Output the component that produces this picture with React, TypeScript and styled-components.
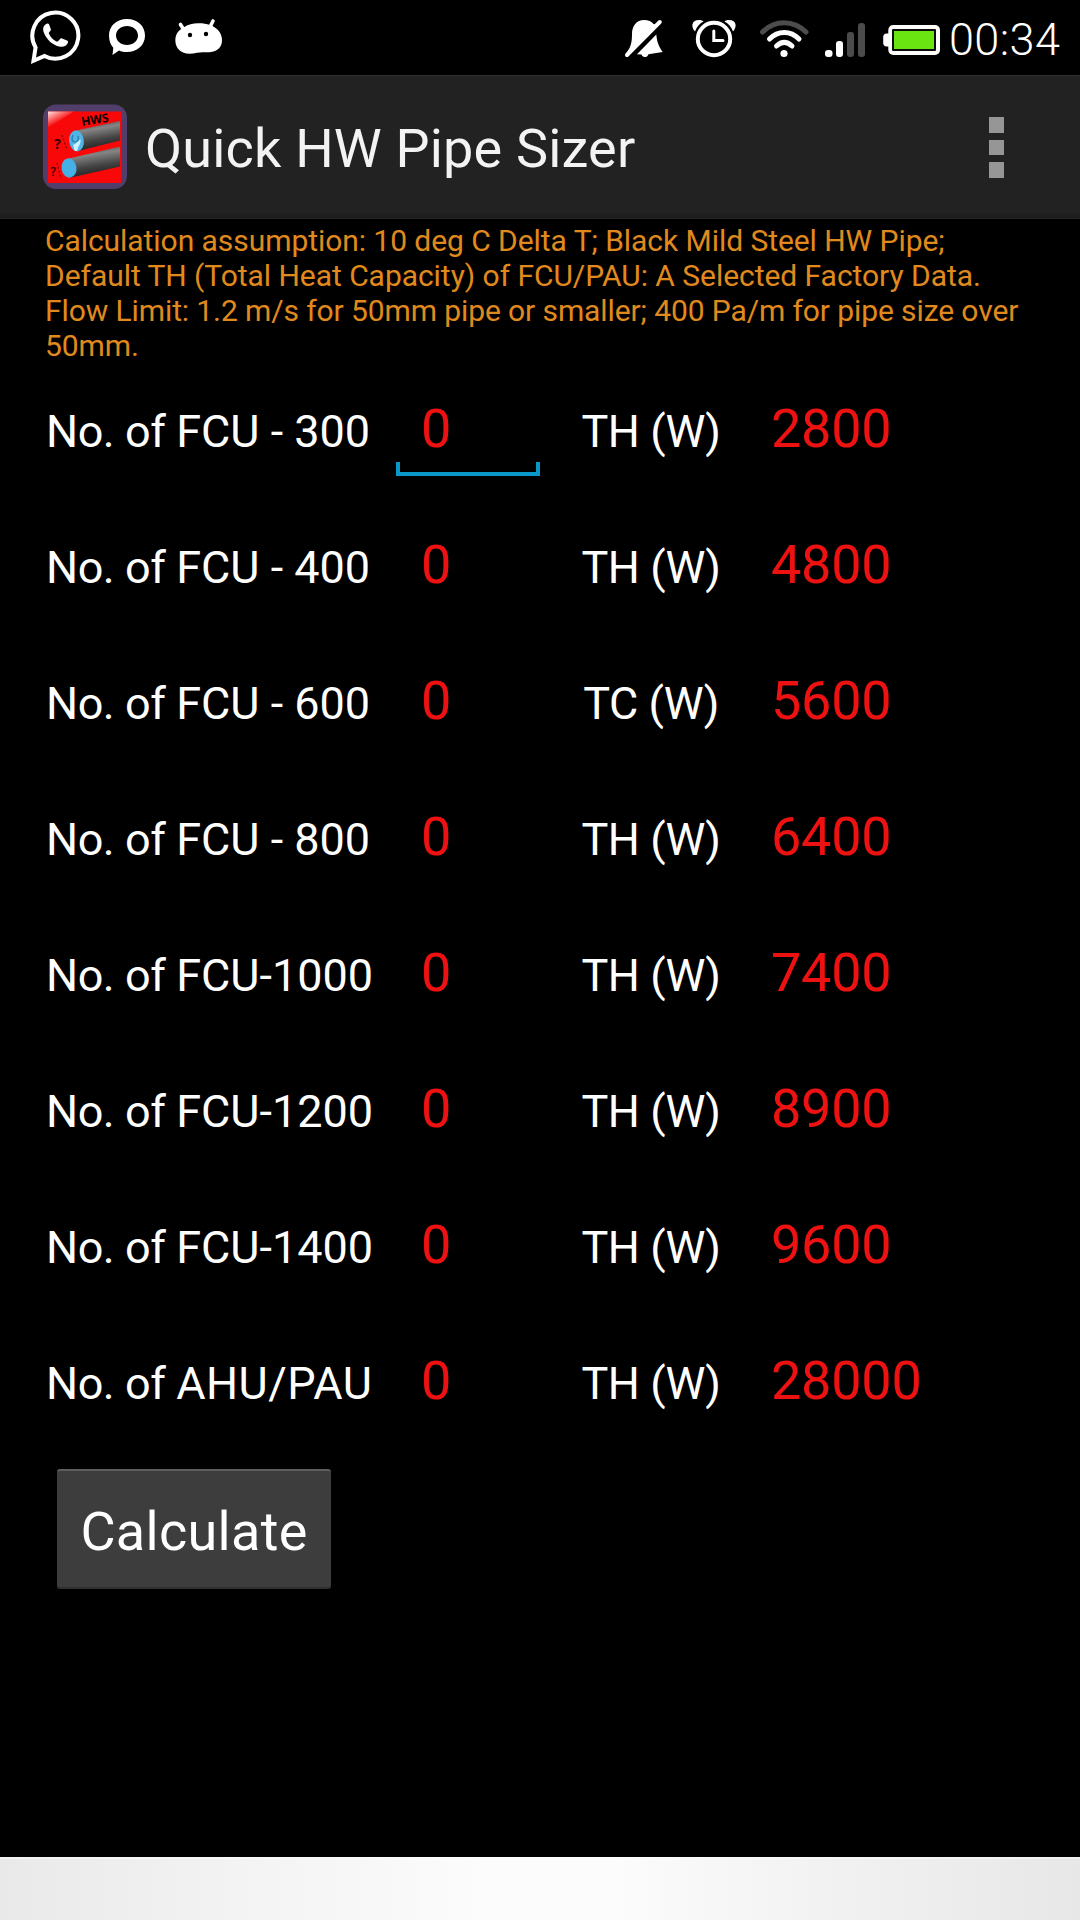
import React from "react";
import styled, { createGlobalStyle } from "styled-components";

const GlobalStyle = createGlobalStyle`
  html, body { margin: 0; padding: 0; background: #000; }
  * { box-sizing: border-box; }
`;

const Screen = styled.div`
  width: 1080px;
  height: 1920px;
  display: flex;
  flex-direction: column;
  background: #000;
  color: #fff;
  font-family: Roboto, "Liberation Sans", sans-serif;
  overflow: hidden;
`;

const StatusBar = styled.header`
  flex: none;
  height: 75px;
  padding: 0 20px 0 28px;
  display: flex;
  justify-content: space-between;
`;

const IconGroup = styled.div`
  display: flex;
  svg { display: block; flex: none; }
`;

const Clock = styled.span`
  width: 111px;
  font-size: 45px;
  font-weight: 300;
  line-height: 80px;
  letter-spacing: 0.4px;
  white-space: nowrap;
`;

const ActionBar = styled.div`
  flex: none;
  height: 144px;
  padding: 0 76px 0 42px;
  display: flex;
  align-items: center;
  background: linear-gradient(#222 0, #222 136px, #1a1a1a 143px);
  border-top: 1px solid #303030;
  border-bottom: 1px solid #262626;
  svg { display: block; flex: none; }
`;

const Title = styled.h1`
  flex: 1;
  margin: 0 0 0 17px;
  font-size: 54px;
  font-weight: 400;
  line-height: 64px;
  letter-spacing: 0.18px;
  color: #f3f3f3;
  padding-top: 3px;
`;

const Overflow = styled.div`
  display: flex;
  flex-direction: column;
  gap: 7px;
  padding-top: 1px;
`;

const Dot = styled.i`
  width: 15.5px;
  height: 15.5px;
  background: #969696;
`;

const Content = styled.main`
  flex: 1;
  padding: 4px 45px 0;
`;

const Note = styled.p`
  margin: 0;
  height: 156px;
  color: #e08a1e;
  font-size: 30px;
  line-height: 35px;
`;

const NoteLine = styled.span<{ $spacing: number }>`
  display: block;
  white-space: nowrap;
  letter-spacing: ${(p) => p.$spacing}px;
`;

const Row = styled.div`
  height: 136px;
  padding-top: 18px;
  display: grid;
  grid-template-columns: 351px 144px 38px 145px 48px 1fr;
  align-items: start;
`;

const Label = styled.span`
  font-size: 45px;
  line-height: 53px;
  padding: 8px 0 0 1px;
  white-space: pre;
`;

const Spaced = styled.span<{ $spacing: number }>`
  letter-spacing: ${(p) => p.$spacing}px;
`;

const Unit = styled(Label)`
  grid-column: 4;
  text-align: center;
  letter-spacing: -0.45px;
`;

const Field = styled.span<{ $focused?: boolean }>`
  height: 79px;
  padding-left: 25px;
  font-size: 54px;
  line-height: 64px;
  color: #ee1111;
  white-space: nowrap;
  background: ${(p) =>
    p.$focused
      ? `linear-gradient(#0a98c9, #0a98c9) left bottom / 100% 4px no-repeat,
         linear-gradient(#0a98c9, #0a98c9) left bottom / 4px 14px no-repeat,
         linear-gradient(#0a98c9, #0a98c9) right bottom / 4px 14px no-repeat`
      : "none"};
`;

const Value = styled(Field)`
  grid-column: 6;
  padding-left: 0;
  letter-spacing: -0.25px;
`;

const CalculateButton = styled.button`
  display: block;
  margin: 2px 0 0 12px;
  width: 274px;
  height: 120px;
  padding: 6px 0 0;
  border: 0;
  border-top: 2px solid #5e5e5e;
  border-bottom: 2px solid #303030;
  border-radius: 3px;
  background: #3d3d3d;
  color: #fff;
  font: 400 54px/64px Roboto, "Liberation Sans", sans-serif;
  letter-spacing: 0.3px;
`;

const NavBar = styled.footer`
  flex: none;
  height: 63px;
  background: linear-gradient(90deg, #e9e9e9 0%, #f3f3f3 22%, #fcfcfc 45%, #fcfcfc 57%, #f2f2f2 76%, #e7e7e7 100%);
  border-top: 2px solid rgba(255, 255, 255, 0.4);
`;

const WhatsApp = () => (
  <svg width="80" height="75" viewBox="28 0 80 75" fill="none">
    <path d="M35.600 47.400A23 23 0 1 1 44.500 55.900L33.500 60.800Z" stroke="#fff" strokeWidth="4" />
    <path d="M45.500 24.500c-2.500 1.500-3 5-1.500 8.500 3 7 8 11.500 15 13.500 4 1 8-.5 9-4 .2-1-.2-1.600-1-2l-5-2c-1-.4-1.600 0-2.200.7l-1.800 2c-.6.500-1.200.5-2 .1-3.500-2-5.500-4.500-7-7.500-.3-.8-.2-1.200.4-1.800 1.500-1.600 1.700-2 1.300-3.200l-1.700-4.500c-.6-1.200-2.300-.8-3.500.2z" fill="#fff" />
  </svg>
);

const Bubble = () => (
  <svg width="67" height="75" viewBox="108 0 67 75">
    <path fillRule="evenodd" fill="#fff" d="M127 19c10.500 0 18 7 18 16.500S137.500 52 127 52c-3 0-5.500-.5-8-1.500L112.500 55l.8-7.200C110.500 44.800 109 40.500 109 35.500 109 26 116.500 19 127 19zM127 26c-6 0-11 4-11 9.500S121 45 127 45s11-4 11-9.500S133 26 127 26z" />
  </svg>
);

const Droid = () => (
  <svg width="48" height="75" viewBox="175 0 48 75">
    <path fill="#fff" d="M183.500 27.500C188 24.500 193 23.500 198 23.300c4-.2 8 .4 12 1.700 7 2.500 12 8 12 15 0 7-4 11-11 12-5 .6-9-.5-14 .8-8 2-15 1-19-4-3.500-4.500-3.500-12-.3-16.500 1.500-2 3.300-3.500 5.800-4.800z" />
    <path d="M180.500 24.500l3.500 5.500M213 21l-3 6" stroke="#fff" strokeWidth="3.600" strokeLinecap="round" />
    <circle cx="190" cy="35" r="2.200" /><circle cx="206" cy="34" r="2.200" />
  </svg>
);

const BellOff = () => (
  <svg width="67" height="75" viewBox="624 0 67 75">
    <path fill="#fff" d="M626 53.500c4.500-6 6-10 6-19.500 0-8 4.500-14 12-14 4.500 0 7.500 1.300 9.500 4L657 25 630 53zM656.300 34.500c.7 7.500 2.500 12 6.400 17.500l-14.200 2.200c-.8 2-2 2.800-3.800 2.800-1.500 0-2.700-.9-3.200-2.400l-4.500-.3z" />
    <path d="M627 55L659.800 22" stroke="#fff" strokeWidth="4" strokeLinecap="round" />
  </svg>
);

const Alarm = () => (
  <svg width="68" height="75" viewBox="691 0 68 75" fill="none" stroke="#fff">
    <circle cx="714" cy="39" r="16.200" strokeWidth="4" />
    <path d="M713.800 31v9.500H723" strokeWidth="3" strokeLinecap="round" />
    <path fill="#fff" stroke="none" d="M695 31.500c-4-4-4-11.500 4-11.500 2 0 3.500.5 4.500 1.500-4 2-6.800 5.500-8.500 10zM733 31.500c4-4 4-11.500-4-11.500-2 0-3.500.5-4.500 1.500 4 2 6.800 5.500 8.500 10z" />
  </svg>
);

const Wifi = () => (
  <svg width="65" height="75" viewBox="759 0 65 75" fill="none" strokeWidth="5" strokeLinecap="round">
    <path d="M762.500 32c12-12.500 31-12.500 43.500 0" stroke="#4c4c4c" />
    <path d="M769.500 39c8.500-8.700 21-8.700 29.500 0M776.500 46c5-4.700 10.500-4.700 15.500 0" stroke="#fff" />
    <circle cx="784" cy="53.500" r="3.600" fill="#fff" />
  </svg>
);

const Signal = () => (
  <svg width="58" height="75" viewBox="824 0 58 75">
    <rect x="825" y="50" width="7.500" height="7" rx="3" fill="#fff" />
    <rect x="836" y="41" width="7" height="16" rx="3" fill="#fff" />
    <rect x="847" y="32" width="7" height="25" rx="3" fill="#4c4c4c" />
    <rect x="858" y="23" width="7" height="34" rx="3" fill="#4c4c4c" />
  </svg>
);

const Battery = () => (
  <svg width="67" height="75" viewBox="882 0 67 75">
    <path fill="#fff" d="M889 33.500h-2.500c-2 0-3.300 1.500-3.300 3.500v6c0 2 1.300 3.500 3.300 3.500H889z" />
    <rect x="888.300" y="25" width="51.700" height="30" rx="5" fill="#fff" />
    <rect x="892" y="29" width="44" height="22" rx="1" fill="#0c0c0c" />
    <rect x="894" y="31" width="40" height="18" fill="#6ae512" />
  </svg>
);

const AppIcon = () => (
  <svg width="86" height="88" viewBox="42 103 86 88">
    <defs>
      <linearGradient id="pipe" x1="0" y1="0" x2=".25" y2="1">
        <stop offset="0" stopColor="#333" /><stop offset=".35" stopColor="#858585" /><stop offset=".7" stopColor="#444" /><stop offset="1" stopColor="#222" />
      </linearGradient>
      <linearGradient id="shine" x1="0" y1="0" x2=".5" y2=".6">
        <stop offset="0" stopColor="#ffe4e4" /><stop offset="1" stopColor="#f80808" />
      </linearGradient>
    </defs>
    <rect x="43" y="104.500" width="84" height="84.500" rx="13" fill="#523e6b" />
    <rect x="48" y="111.500" width="73" height="71.500" fill="#f80808" />
    <path d="M48 111.500h26L48 128z" fill="url(#shine)" />
    <text x="82" y="126" fontFamily="Open Sans, sans-serif" fontWeight="700" fontSize="12" transform="rotate(-9 82 126)">HWS</text>
    <path fill="url(#pipe)" d="M76 130.500L120 121v19.500L78 151z" />
    <path fill="url(#pipe)" d="M69 158.500L120 146.500v20L71 177.500z" />
    <ellipse cx="76.500" cy="141" rx="7.300" ry="10.500" fill="#50b4e4" transform="rotate(-8 76 141)" />
    <path d="M73 145c2.500-1 5-3.500 7.500-6 .5 4-1 6-2.200 8-.5 3-1.300 4.500-3 4-1.800-.8-1-3.500-2.300-6z" fill="#c8f2ff" />
    <path d="M73 135c-2 4-1 7 2 7s4-3 3-6" fill="none" stroke="#2878a8" strokeWidth="1.200" />
    <ellipse cx="69" cy="168" rx="7.500" ry="9.700" fill="#45b0e6" transform="rotate(-8 69 168)" />
    <text x="54" y="149" fontFamily="Open Sans, sans-serif" fontWeight="700" fontSize="14.500" fill="#300">?</text>
    <text x="50.500" y="176" fontFamily="Open Sans, sans-serif" fontWeight="600" fontSize="12" fill="#300">?</text>
    <path d="M62 135l5 15M57 163l4 16" stroke="#700" strokeWidth="1" strokeDasharray="2 2" />
  </svg>
);

const noteLines = [
  { text: "Calculation assumption: 10 deg C Delta T; Black Mild Steel HW Pipe;", spacing: -0.055 },
  { text: "Default TH (Total Heat Capacity) of FCU/PAU: A Selected Factory Data.", spacing: -0.045 },
  { text: "Flow Limit: 1.2 m/s for 50mm pipe or smaller; 400 Pa/m for pipe size over", spacing: -0.1 },
  { text: "50mm.", spacing: -0.1 },
];

const rows = [
  { name: "FCU - 300", unit: "TH (W)", value: "2800", spacing: 0 },
  { name: "FCU - 400", unit: "TH (W)", value: "4800", spacing: 0 },
  { name: "FCU - 600", unit: "TC (W)", value: "5600", spacing: 0 },
  { name: "FCU - 800", unit: "TH (W)", value: "6400", spacing: 0 },
  { name: "FCU-1000", unit: "TH (W)", value: "7400", spacing: 0 },
  { name: "FCU-1200", unit: "TH (W)", value: "8900", spacing: 0 },
  { name: "FCU-1400", unit: "TH (W)", value: "9600", spacing: 0 },
  { name: "AHU/PAU", unit: "TH (W)", value: "28000", spacing: 0.5 },
];

export default function App() {
  return (
    <Screen>
      <GlobalStyle />
      <StatusBar>
        <IconGroup>
          <WhatsApp />
          <Bubble />
          <Droid />
        </IconGroup>
        <IconGroup>
          <BellOff />
          <Alarm />
          <Wifi />
          <Signal />
          <Battery />
          <Clock>00:34</Clock>
        </IconGroup>
      </StatusBar>
      <ActionBar>
        <AppIcon />
        <Title>Quick HW Pipe Sizer</Title>
        <Overflow>
          <Dot />
          <Dot />
          <Dot />
        </Overflow>
      </ActionBar>
      <Content>
        <Note>
          {noteLines.map((l) => (
            <NoteLine key={l.text} $spacing={l.spacing}>{l.text}</NoteLine>
          ))}
        </Note>
        {rows.map((r, i) => (
          <Row key={r.name}>
            <Label>
              <Spaced $spacing={-0.45}>{"No. of "}</Spaced>
              <Spaced $spacing={r.spacing}>{r.name}</Spaced>
            </Label>
            <Field $focused={i === 0}>0</Field>
            <Unit>{r.unit}</Unit>
            <Value>{r.value}</Value>
          </Row>
        ))}
        <CalculateButton>Calculate</CalculateButton>
      </Content>
      <NavBar />
    </Screen>
  );
}
